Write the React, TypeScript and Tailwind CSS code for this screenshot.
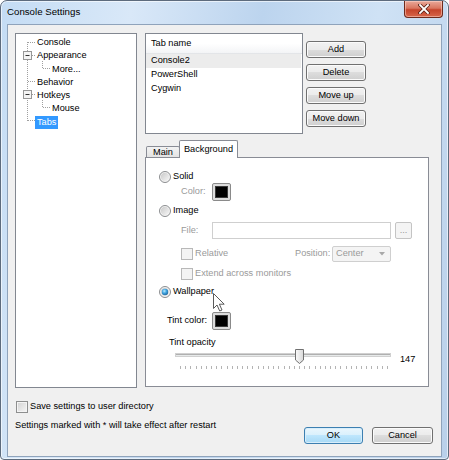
import React from "react";

const FONT = "font-['Liberation_Sans',Arial,sans-serif]";

function Radio({ checked }: { checked?: boolean }) {
  return (
    <svg width="12" height="12" viewBox="0 0 12 12" className="shrink-0">
      <defs>
        <linearGradient id="rg" x1="0" y1="0" x2="1" y2="1">
          <stop offset="0" stopColor="#c9c9c9" />
          <stop offset="1" stopColor="#f7f7f7" />
        </linearGradient>
        <radialGradient id="rb" cx="0.4" cy="0.35" r="0.75">
          <stop offset="0" stopColor="#b9ecff" />
          <stop offset="0.45" stopColor="#3fa3e0" />
          <stop offset="1" stopColor="#1b5d91" />
        </radialGradient>
      </defs>
      <circle cx="6" cy="6" r="5.5" fill="#f4f4f4" stroke="#8b8d8f" />
      <circle cx="6" cy="6" r="4.2" fill="url(#rg)" />
      {checked && <circle cx="6" cy="6" r="3.2" fill="url(#rb)" />}
    </svg>
  );
}

function DisabledCheck() {
  return <div className="w-[12px] h-[12px] shrink-0 border border-[#b8b8b8] bg-[#f3f3f3]" />;
}

function Swatch() {
  return (
    <div className="w-[19px] h-[18px] border border-[#8a8a8a] rounded-[2px] bg-[#dcdcdc] p-[2px]">
      <div className="w-full h-full bg-black border border-[#3a3a3a]" />
    </div>
  );
}

function Btn({ label, w, def }: { label: string; w: string; def?: boolean }) {
  return (
    <div
      className={
        "h-[17px] flex items-center justify-center rounded-[3px] border text-[9.2px] text-black " +
        w +
        (def
          ? " border-[#3c7fb1] bg-[linear-gradient(to_bottom,#eaf6fd_0%,#d9f0fc_50%,#bee6fd_50%,#a7d9f5_100%)] shadow-[inset_0_0_0_1px_#d8eefb]"
          : " border-[#707070] bg-[linear-gradient(to_bottom,#f2f2f2_0%,#ebebeb_50%,#dddddd_50%,#cfcfcf_100%)] shadow-[inset_0_0_0_1px_#fbfbfb]")
      }
    >
      {label}
    </div>
  );
}

function TreeLines() {
  const d = "1 1";
  const c = "#a0a0a0";
  return (
    <svg className="absolute left-0 top-0" width="120" height="100">
      <g stroke={c} strokeDasharray={d} strokeWidth="1">
        <line x1="11.5" y1="8" x2="11.5" y2="87" />
        <line x1="12" y1="8.5" x2="20" y2="8.5" />
        <line x1="16" y1="21.5" x2="20" y2="21.5" />
        <line x1="12" y1="47.5" x2="20" y2="47.5" />
        <line x1="16" y1="60.5" x2="20" y2="60.5" />
        <line x1="12" y1="86.5" x2="20" y2="86.5" />
        <line x1="26.5" y1="27" x2="26.5" y2="34" />
        <line x1="27" y1="34.5" x2="34" y2="34.5" />
        <line x1="26.5" y1="66" x2="26.5" y2="73" />
        <line x1="27" y1="73.5" x2="34" y2="73.5" />
      </g>
      {[21.5, 60.5].map((y) => (
        <g key={y}>
          <rect x="7.5" y={y - 4} width="8" height="8" fill="#f4f4f4" stroke="#979797" />
          <line x1="9.5" y1={y} x2="13.5" y2={y} stroke="#333" />
        </g>
      ))}
    </svg>
  );
}

function Tree() {
  const items: { t: string; sub?: boolean; sel?: boolean }[] = [
    { t: "Console" },
    { t: "Appearance" },
    { t: "More..." , sub: true },
    { t: "Behavior" },
    { t: "Hotkeys" },
    { t: "Mouse", sub: true },
    { t: "Tabs", sel: true },
  ];
  return (
    <div className="relative w-[122px] h-[355px] border border-[#828790] bg-white shrink-0">
      <TreeLines />
      <div className="flex flex-col pt-[1.7px]">
        {items.map((it) => (
          <div
            key={it.t}
            className={"h-[13.33px] flex items-center " + (it.sub ? "pl-[34px]" : "pl-[19px]")}
          >
            <span
              className={
                "px-[2px] leading-[13px] text-[9.2px] " +
                (it.sel ? "bg-[#3399ff] text-white" : "text-black")
              }
            >
              {it.t}
            </span>
          </div>
        ))}
      </div>
    </div>
  );
}

function TabList() {
  return (
    <div className="flex">
      <div className="w-[158px] h-[101px] border border-[#828790] bg-white flex flex-col">
        <div className="h-[20px] flex items-center pl-[5px] text-[9.2px] text-black bg-[linear-gradient(to_bottom,#ffffff_0%,#ffffff_50%,#f3f4f6_100%)] border-b border-[#e3e5e8]">
          Tab name
        </div>
        <div className="h-[14px] flex items-center pl-[5px] text-[9.2px] text-black bg-[#ececec] mr-[1px]">
          Console2
        </div>
        <div className="h-[14px] flex items-center pl-[5px] text-[9.2px] text-black">PowerShell</div>
        <div className="h-[14px] flex items-center pl-[5px] text-[9.2px] text-black">Cygwin</div>
      </div>
      <div className="ml-[3px] mt-[8px] flex flex-col gap-[6px]">
        <Btn label="Add" w="w-[60px]" />
        <Btn label="Delete" w="w-[60px]" />
        <Btn label="Move up" w="w-[60px]" />
        <Btn label="Move down" w="w-[60px]" />
      </div>
    </div>
  );
}

function Slider() {
  const ticks: number[] = [];
  for (let i = 0; i <= 40; i++) ticks.push(5 + (i * 207) / 40);
  return (
    <svg width="216" height="22" className="shrink-0">
      <defs>
        <linearGradient id="th" x1="0" y1="0" x2="1" y2="0">
          <stop offset="0" stopColor="#fafafa" />
          <stop offset="1" stopColor="#d8d8d8" />
        </linearGradient>
      </defs>
      <rect x="0.5" y="4.5" width="215" height="3" fill="#e7eaea" stroke="#d0d0d0" />
      <line x1="1" y1="5.5" x2="215" y2="5.5" stroke="#b0b0b0" />
      {ticks.map((x, i) => (
        <line key={i} x1={Math.round(x) + 0.5} y1="17" x2={Math.round(x) + 0.5} y2="20" stroke="#b4b4b4" />
      ))}
      <path d="M120.5 0.5 H128.5 V11 L124.5 14.5 L120.5 11 Z" fill="url(#th)" stroke="#707070" />
    </svg>
  );
}

function Panel() {
  const gray = "text-[#9a9a9a]";
  return (
    <div className="relative w-[284px] h-[230px] border border-[#898c95] bg-white flex flex-col text-[9.2px] text-black">
      {/* Solid */}
      <div className="mt-[13px] h-[12px] pl-[13px] flex items-center gap-[2px]">
        <Radio />
        <span>Solid</span>
      </div>
      <div className="h-[18px] pl-[35px] flex items-center">
        <span className={"w-[31px] " + gray}>Color:</span>
        <Swatch />
      </div>
      {/* Image */}
      <div className="mt-[4px] h-[12px] pl-[13px] flex items-center gap-[2px]">
        <Radio />
        <span>Image</span>
      </div>
      <div className="mt-[5px] h-[17px] pl-[35px] flex items-center">
        <span className={"w-[31px] " + gray}>File:</span>
        <div className="w-[179px] h-[17px] border border-[#cfcfcf] bg-white" />
        <div className="ml-[4px] w-[17px] h-[17px] border border-[#c4c4c4] rounded-[2px] bg-[#f4f4f4] flex items-center justify-center text-[#9a9a9a] leading-none">
          ...
        </div>
      </div>
      <div className="mt-[7px] h-[16px] pl-[35px] flex items-center">
        <div className="w-[114px] flex items-center gap-[2px]">
          <DisabledCheck />
          <span className={gray}>Relative</span>
        </div>
        <span className={"w-[37px] " + gray}>Position:</span>
        <div className="w-[59px] h-[16px] border border-[#cfcfcf] rounded-[2px] bg-[#f4f4f4] flex items-center pl-[3px] pr-[5px]">
          <span className={"flex-1 " + gray}>Center</span>
          <svg width="6" height="4" viewBox="0 0 6 4">
            <path d="M0 0 H6 L3 3.5 Z" fill="#a8a8a8" />
          </svg>
        </div>
      </div>
      <div className="mt-[6px] h-[12px] pl-[35px] flex items-center gap-[2px]">
        <DisabledCheck />
        <span className={gray}>Extend across monitors</span>
      </div>
      {/* Wallpaper */}
      <div className="mt-[6px] h-[12px] pl-[13px] flex items-center gap-[2px]">
        <Radio checked />
        <span>Wallpaper</span>
      </div>
      <div className="mt-[14px] h-[18px] pl-[21px] flex items-center">
        <span className="w-[45px]">Tint color:</span>
        <Swatch />
      </div>
      <div className="mt-[7px] h-[12px] pl-[23px] flex items-center">Tint opacity</div>
      <div className="h-[22px] pl-[29px] flex items-start">
        <Slider />
        <span className="ml-[9px] mt-[4px] leading-[12px]">147</span>
      </div>
      {/* mouse cursor */}
      <svg className="absolute left-[67px] top-[135px]" width="13" height="19" viewBox="0 0 13 19">
        <path
          d="M0.5 0.5 L0.5 15.5 L4 12 L6.7 18 L9 17 L6.4 11.2 L11.2 11.2 Z"
          fill="#ffffff"
          stroke="#5a5a5a"
          strokeLinejoin="round"
        />
      </svg>
    </div>
  );
}

function Tabs() {
  return (
    <div className="flex flex-col">
      <div className="h-[17px] flex items-end text-[9.2px] text-black">
        <div className="ml-[1px] w-[34px] h-[11px] border border-b-0 border-[#898c95] rounded-t-[2px] bg-[linear-gradient(to_bottom,#f3f3f3,#e3e3e3)] flex justify-center leading-[10px]">
          Main
        </div>
        <div className="relative z-10 -ml-[1px] mb-[-1px] w-[59px] h-[18px] border border-b-0 border-[#898c95] rounded-t-[2px] bg-white flex justify-center pt-[2px] leading-[12px]">
          Background
        </div>
      </div>
      <Panel />
    </div>
  );
}

export default function App() {
  return (
    <div className={"w-[449px] h-[460px] bg-white " + FONT}>
      <div className="w-[449px] h-[460px] rounded-t-[7px] rounded-b-[4px] border border-[#5d6b7d] bg-[linear-gradient(100deg,#c4dcf4_0%,#d9e8f8_25%,#bcd4ee_50%,#cfe2f5_72%,#b9d0ea_100%)] shadow-[inset_0_0_0_1px_rgba(255,255,255,0.6)] flex flex-col">
        <div className="h-[23px] flex items-start">
          <span className="ml-[6px] mt-[5px] text-[9.7px] leading-[12px] text-black">Console Settings</span>
          <div className="ml-auto mr-[5px] w-[39px] h-[17px] rounded-b-[4px] border border-t-0 border-[#6e2a1c] bg-[linear-gradient(to_bottom,#e9a99a_0%,#d9765f_45%,#c5442b_55%,#d7664a_100%)] shadow-[inset_0_0_0_1px_rgba(255,220,210,0.5)] flex items-center justify-center">
            <svg width="12" height="10" viewBox="0 0 12 10">
              <path d="M2 1 L10 9 M10 1 L2 9" stroke="#5a2015" strokeWidth="3.4" strokeLinecap="square" />
              <path d="M2 1 L10 9 M10 1 L2 9" stroke="#ffffff" strokeWidth="1.8" strokeLinecap="square" />
            </svg>
          </div>
        </div>
        <div className="mx-[6px] h-[433px] border border-[#8fa3bb] bg-[#f0f0f0] pl-[7px] pt-[8px] pr-[8px] flex flex-col">
          <div className="flex">
            <Tree />
            <div className="ml-[8px] flex flex-col">
              <TabList />
              <div className="mt-[6px]">
                <Tabs />
              </div>
            </div>
          </div>
          <div className="mt-[12px] h-[13px] pl-[1px] flex items-center gap-[2px] text-[9.2px] text-black">
            <div className="w-[12px] h-[12px] border border-[#8e8f8f] bg-[linear-gradient(135deg,#d2d2d2,#f6f6f6)] shadow-[inset_0_0_0_1px_#f4f4f4]" />
            <span>Save settings to user directory</span>
          </div>
          <div className="mt-[6px] flex items-start text-[9.2px] text-black">
            <span className="leading-[12px]">Settings marked with * will take effect after restart</span>
            <div className="ml-auto mt-[8px] flex gap-[9px]">
              <Btn label="OK" w="w-[59px]" def />
              <Btn label="Cancel" w="w-[61px]" />
            </div>
          </div>
        </div>
      </div>
    </div>
  );
}
